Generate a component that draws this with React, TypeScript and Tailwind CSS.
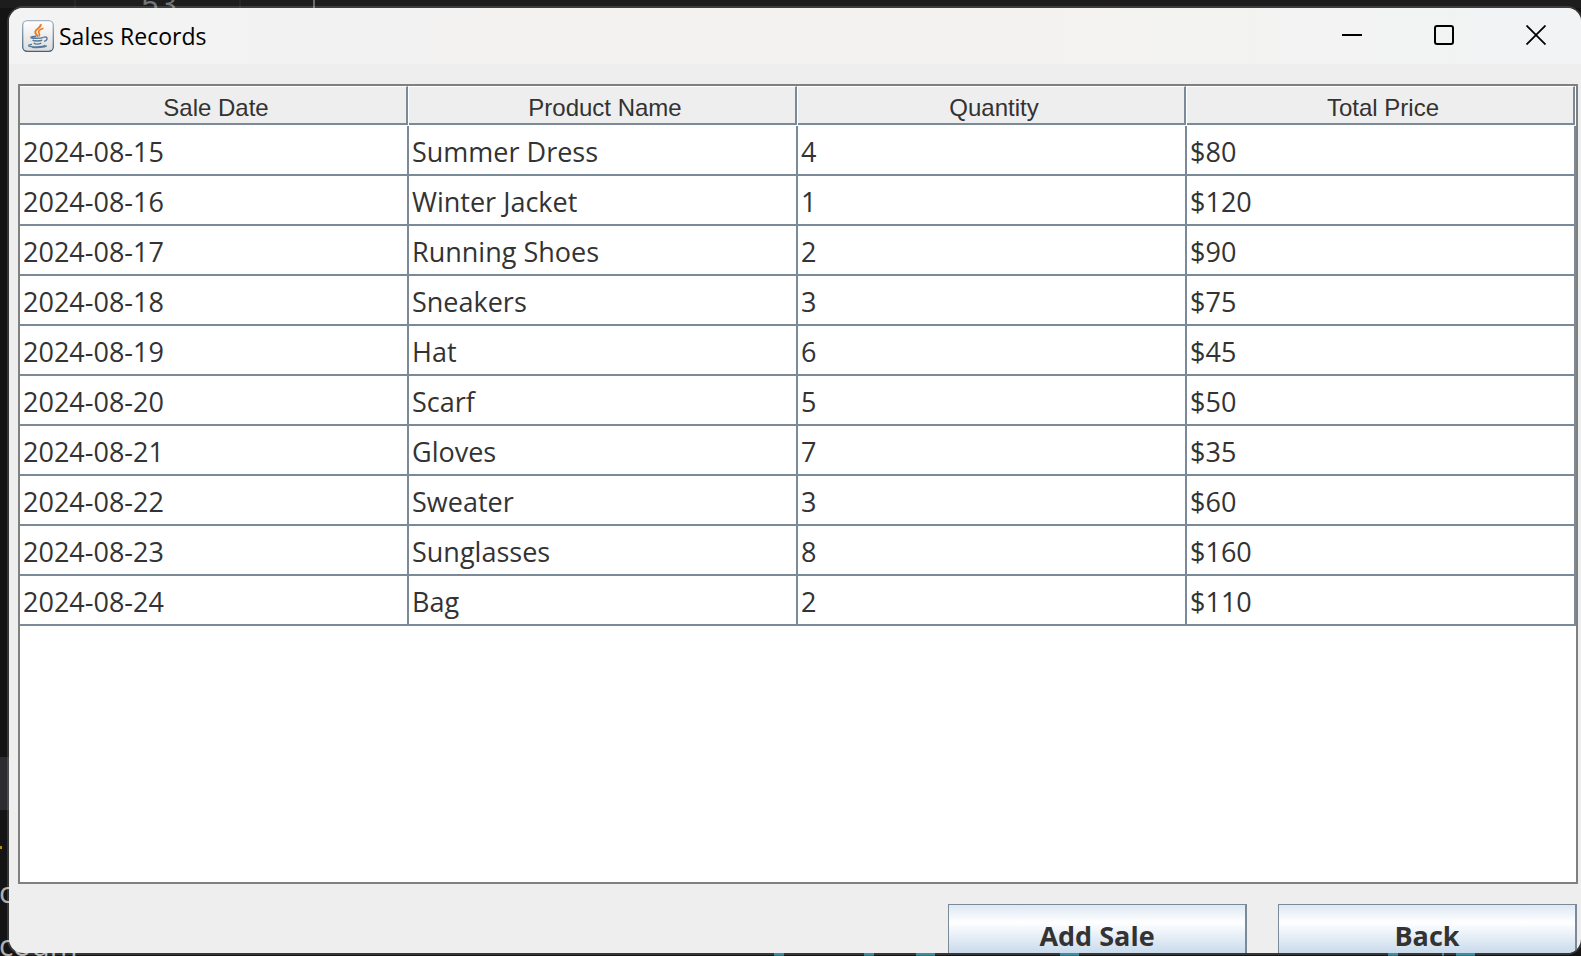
const sales = [
  ["2024-08-15", "Summer Dress", "4", "$80"],
  ["2024-08-16", "Winter Jacket", "1", "$120"],
  ["2024-08-17", "Running Shoes", "2", "$90"],
  ["2024-08-18", "Sneakers", "3", "$75"],
  ["2024-08-19", "Hat", "6", "$45"],
  ["2024-08-20", "Scarf", "5", "$50"],
  ["2024-08-21", "Gloves", "7", "$35"],
  ["2024-08-22", "Sweater", "3", "$60"],
  ["2024-08-23", "Sunglasses", "8", "$160"],
  ["2024-08-24", "Bag", "2", "$110"],
];

const columns = ["Sale Date", "Product Name", "Quantity", "Total Price"];

function JavaIcon() {
  return (
    <svg className="size-8 shrink-0" viewBox="0 0 32 32" fill="none" aria-hidden="true">
      <defs>
        <linearGradient id="tile" x1="0" y1="0" x2="0" y2="1">
          <stop offset="0" stopColor="#ffffff" />
          <stop offset="1" stopColor="#dcdcdc" />
        </linearGradient>
        <linearGradient id="rim" x1="0" y1="0" x2="0" y2="1">
          <stop offset="0" stopColor="#a3b4c6" />
          <stop offset="1" stopColor="#41617e" />
        </linearGradient>
      </defs>
      <rect x="0.7" y="0.7" width="30.6" height="30.6" rx="4.5" fill="url(#tile)" stroke="url(#rim)" strokeWidth="1.3" />
      <path d="M18.6 4.2c1.4 3.4-5.4 4.6-5.4 7.8 0 2 1.8 2.9 2.9 4.6" stroke="#ec7a24" strokeWidth="2" />
      <path d="M21.4 8.2c-3 1-5 2.3-4.7 4.1.2 1.3 1.8 2 .3 4.1" stroke="#ec7a24" strokeWidth="1.6" />
      <path d="M14.2 16.2c-3.2.2-5.6.8-5.3 1.4.5.9 9.6.9 12.8-.3M10.6 20.1c1.6 1.3 7.3 1.2 9.6.1M11.7 23c1.8 1.2 5.4 1.1 7.6.1" stroke="#55799b" strokeWidth="1.4" />
      <path d="M21.8 17.2c4.5-1.2 4.1 3.2.2 4.2" stroke="#55799b" strokeWidth="1.3" />
      <path d="M10 24.3c-2.5.2-4 1-3.2 1.6 2 1.3 14.2 1.3 16.6-.6M10 27.3c4.7.7 12.5.3 14.9-1.5" stroke="#55799b" strokeWidth="1.2" />
    </svg>
  );
}

function Backdrop() {
  return (
    <svg className="absolute inset-0 size-full" aria-hidden="true">
      <rect width="100%" height="8" fill="#1d1d1d" />
      <path d="M75 0V8M240 0V8" stroke="#333333" />
      <path d="M314 0V8" stroke="#6b6b6b" strokeWidth="2" />
      <text x="141" y="14" fill="#6e7681" className="font-['Liberation_Mono',monospace] text-[30px]">53</text>
      <rect y="757" width="9" height="53" fill="#2b2b30" />
      <rect y="846" width="2" height="3" fill="#b89500" />
      <text x="-1" y="903" fill="#b0b0b0" className="text-[30px]">c</text>
      <text x="-1" y="956" fill="#b0b0b0" className="text-[30px]">coqm</text>
      <path d="M774 954h10M864 954h10M916 954h19M1060 954h19M1388 954h10M1442 954h2M1456 954h19" stroke="#23788a" strokeWidth="4" />
    </svg>
  );
}

const captionButton = "flex h-full w-[92px] items-center justify-center pb-0.5 pl-0.5 text-black";
const actionButton =
  "h-[60px] w-[299px] border border-r-2 border-[#7a8a99] bg-[linear-gradient(180deg,#dde8f3_0%,#ffffff_30%,#b8cfe5_100%)] pt-1 text-[27px] leading-9 font-bold";

export default function App() {
  return (
    <main className="relative flex h-screen overflow-hidden bg-[#141414] pt-1.5 pb-px pl-[7px] font-['Open_Sans','Noto_Sans',sans-serif] text-[#333333]">
      <Backdrop />
      <section className="relative -mr-0.5 flex min-w-0 flex-1 flex-col overflow-hidden rounded-2xl border-2 border-white/15 bg-[#eeeeee] bg-clip-padding">
        <header className="flex h-14 shrink-0 items-center bg-[linear-gradient(90deg,#f3f3f3_0%,#f4f2f1_50%,#f3f3f1_75%,#f1f3f5_100%)] pl-[13px] text-black">
          <JavaIcon />
          <h1 className="ml-[5px] flex-1 text-[23px] leading-8 font-normal">Sales Records</h1>
          <button className={captionButton} aria-label="Minimize">
            <svg width="20" height="20" viewBox="0 0 20 20"><path d="M0 10h20" stroke="currentColor" strokeWidth="2" /></svg>
          </button>
          <button className={captionButton} aria-label="Maximize">
            <svg width="20" height="20" viewBox="0 0 20 20" fill="none"><rect x="1" y="1" width="18" height="18" rx="2" stroke="currentColor" strokeWidth="2" /></svg>
          </button>
          <button className={captionButton} aria-label="Close">
            <svg width="20" height="20" viewBox="0 0 20 20"><path d="M.5.5l19 19M19.5.5l-19 19" stroke="currentColor" strokeWidth="1.8" /></svg>
          </button>
        </header>
        <div className="flex min-h-0 flex-1 flex-col pt-5 pr-[3px] pl-[9px]">
          <div className="min-h-0 flex-1 border-2 border-[#808080] bg-white">
            <table className="w-full table-fixed border-separate border-spacing-0">
              <thead>
                <tr>
                  {columns.map((c) => (
                    <th key={c} className="h-10 border-b border-white p-0 font-['Liberation_Sans',Arial,sans-serif] text-2xl font-normal">
                      <div className="mr-px flex h-[39px] items-center justify-center border-t border-r-2 border-b-2 border-t-white border-r-[#7a8a99] border-b-[#7a8a99] bg-[#eeeeee] pt-1.5 pl-1.5">
                        {c}
                      </div>
                    </th>
                  ))}
                </tr>
              </thead>
              <tbody>
                {sales.map((row) => (
                  <tr key={row[0]}>
                    {row.map((value, i) => (
                      <td key={i} className="h-[50px] border-r-2 border-b-2 border-[#7a8a99] px-[3px] pt-1 pb-0 text-[27px] leading-10">
                        {value}
                      </td>
                    ))}
                  </tr>
                ))}
              </tbody>
            </table>
          </div>
          <div className="flex h-[69px] shrink-0 justify-end gap-[31px] pt-5 pr-px">
            <button className={actionButton}>Add Sale</button>
            <button className={actionButton}>Back</button>
          </div>
        </div>
      </section>
    </main>
  );
}
